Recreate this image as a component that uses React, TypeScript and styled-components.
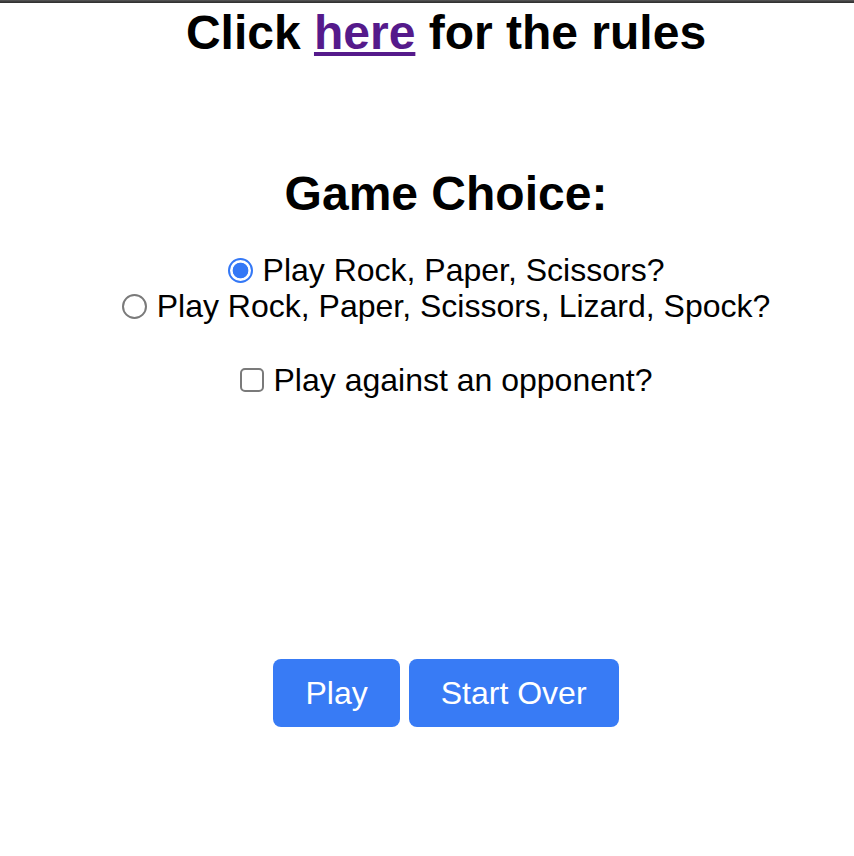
import React, { useState } from "react";
import styled, { createGlobalStyle } from "styled-components";

const GlobalStyle = createGlobalStyle`
  html, body {
    margin: 0;
    padding: 0;
    background: #ffffff;
  }
  body {
    font-family: "Liberation Sans", Arial, Helvetica, sans-serif;
    color: #000000;
  }
`;

const TopBar = styled.div`
  height: 3px;
  background: linear-gradient(to bottom, #5a5a5a 0%, #3a3a3a 60%, #2e2e2e 100%);
`;

const Page = styled.main`
  padding-left: 38px;
  display: flex;
  flex-direction: column;
  align-items: center;
  text-align: center;
`;

const Title = styled.h1`
  margin: 2px 0 0;
  font-size: 48px;
  font-weight: 700;
  line-height: normal;
`;

const RulesLink = styled.a`
  color: #551a8b;
  text-decoration: underline;
  cursor: pointer;
`;

const SectionHeading = styled.h2`
  margin: 106px 0 0;
  font-size: 48px;
  font-weight: 700;
  line-height: normal;
`;

const Options = styled.div`
  margin-top: 31px;
  display: flex;
  flex-direction: column;
  align-items: center;
`;

const OptionLabel = styled.label<{ $spaced?: boolean }>`
  display: flex;
  align-items: center;
  font-size: 32px;
  line-height: 36px;
  margin-top: ${(p) => (p.$spaced ? "38px" : "0")};
  cursor: pointer;
`;

const Radio = styled.input.attrs({ type: "radio" })`
  appearance: none;
  -webkit-appearance: none;
  width: 25px;
  height: 25px;
  margin: 0 10px 0 0;
  border-radius: 50%;
  border: 2px solid #7a7a7a;
  background: #ffffff;
  box-sizing: border-box;
  flex: none;
  cursor: pointer;

  &:checked {
    border: 2.5px solid #3478f6;
    background: radial-gradient(circle, #3478f6 0 7.5px, #ffffff 8.2px);
  }
`;

const Checkbox = styled.input.attrs({ type: "checkbox" })`
  appearance: none;
  -webkit-appearance: none;
  width: 24px;
  height: 24px;
  margin: 0 10px 0 0;
  border-radius: 5px;
  border: 2px solid #7a7a7a;
  background: #ffffff;
  box-sizing: border-box;
  flex: none;
  cursor: pointer;
`;

const ButtonRow = styled.div`
  margin-top: 261px;
  display: flex;
  gap: 9px;
`;

const ActionButton = styled.button`
  font-family: "Liberation Sans", Arial, Helvetica, sans-serif;
  font-size: 32px;
  line-height: 37px;
  color: #ffffff;
  background: #387bf5;
  border: none;
  border-radius: 8px;
  padding: 16px 32px 15px;
  cursor: pointer;
`;

export default function App() {
  const [game, setGame] = useState("rps");
  const [opponent, setOpponent] = useState(false);

  return (
    <>
      <GlobalStyle />
      <TopBar />
      <Page>
        <Title>
          Click <RulesLink href="#rules">here</RulesLink> for the rules
        </Title>
        <SectionHeading>Game Choice:</SectionHeading>
        <Options>
          <OptionLabel>
            <Radio
              name="game"
              checked={game === "rps"}
              onChange={() => setGame("rps")}
            />
            Play Rock, Paper, Scissors?
          </OptionLabel>
          <OptionLabel>
            <Radio
              name="game"
              checked={game === "rpsls"}
              onChange={() => setGame("rpsls")}
            />
            Play Rock, Paper, Scissors, Lizard, Spock?
          </OptionLabel>
          <OptionLabel $spaced>
            <Checkbox
              checked={opponent}
              onChange={(e) => setOpponent(e.target.checked)}
            />
            Play against an opponent?
          </OptionLabel>
        </Options>
        <ButtonRow>
          <ActionButton>Play</ActionButton>
          <ActionButton>Start Over</ActionButton>
        </ButtonRow>
      </Page>
    </>
  );
}
